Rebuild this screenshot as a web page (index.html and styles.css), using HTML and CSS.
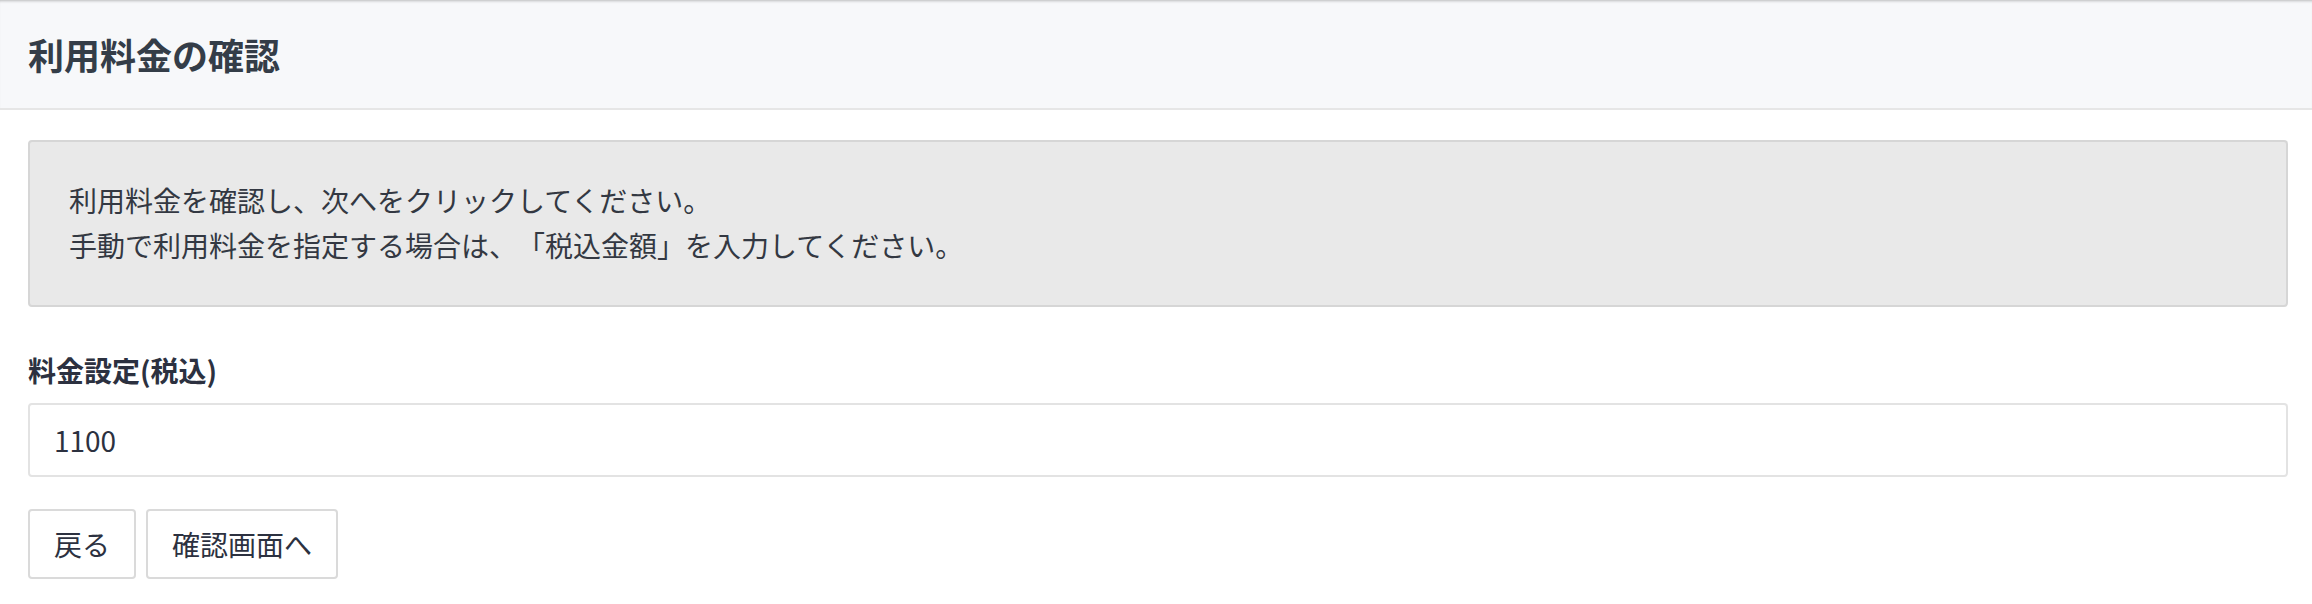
FILE: index.html
```html
<!DOCTYPE html>
<html lang="ja">
<head>
  <meta charset="UTF-8">
  <meta name="viewport" content="width=device-width, initial-scale=1.0">
  <title>利用料金の確認</title>
  <link rel="stylesheet" href="styles.css">
</head>
<body>
  <header class="page-header"><h2>利用料金の確認</h2></header>
  <div class="container">
    <div class="notice">
      利用料金を確認し、次へをクリックしてください。<br>
      手動で利用料金を指定する場合は、「税込金額」を入力してください。
    </div>

    <label class="field-label" for="price">料金設定(税込)</label>
    <input type="text" id="price" class="field-input" value="1100">

    <div class="actions">
      <button class="btn">戻る</button>
      <button class="btn">確認画面へ</button>
    </div>
  </div>
</body>
</html>
```

FILE: styles.css
```css
body {
  font-family: "Noto Sans CJK JP", "Noto Sans", sans-serif;
  color: #2f3542;
  background: #fff;
  margin: 0;
  padding: 0;
  text-spacing-trim: space-all;
}
.page-header {
  background-color: #f7f8fa;
  border-bottom: 2px solid #e6e6e6;
  box-shadow: inset 0 3px 3px -2px rgba(0,0,0,0.25);
  height: 108px;
  display: flex;
  align-items: center;
  padding: 0 28px;
}
.page-header h2 {
  margin: 0;
  font-size: 36px;
  font-weight: 700;
  color: #343d48;
  line-height: 1;
}
.container {
  padding: 30px 24px 0 28px;
}
.notice {
  background: #e9e9e9;
  border: 2px solid #d6d6d6;
  border-radius: 4px;
  padding: 36px 39px 37px;
  font-size: 28px;
  line-height: 45px;
  color: #333842;
}
.field-label {
  display: block;
  margin-top: 41px;
  font-size: 28px;
  font-weight: 700;
  line-height: 45px;
  color: #2c3140;
}
.field-input {
  display: block;
  box-sizing: border-box;
  width: 100%;
  height: 74px;
  margin-top: 10px;
  padding: 0 24px;
  border: 2px solid #e3e3e3;
  border-radius: 4px;
  font-family: inherit;
  font-size: 28px;
  color: #2c3140;
  background: #fff;
  outline: none;
}
.actions {
  display: flex;
  gap: 10px;
  margin-top: 32px;
}
.btn {
  height: 70px;
  padding: 0 24px;
  border: 2px solid #dadada;
  border-radius: 4px;
  background: #fff;
  font-family: inherit;
  font-size: 28px;
  color: #2c3140;
}
```
